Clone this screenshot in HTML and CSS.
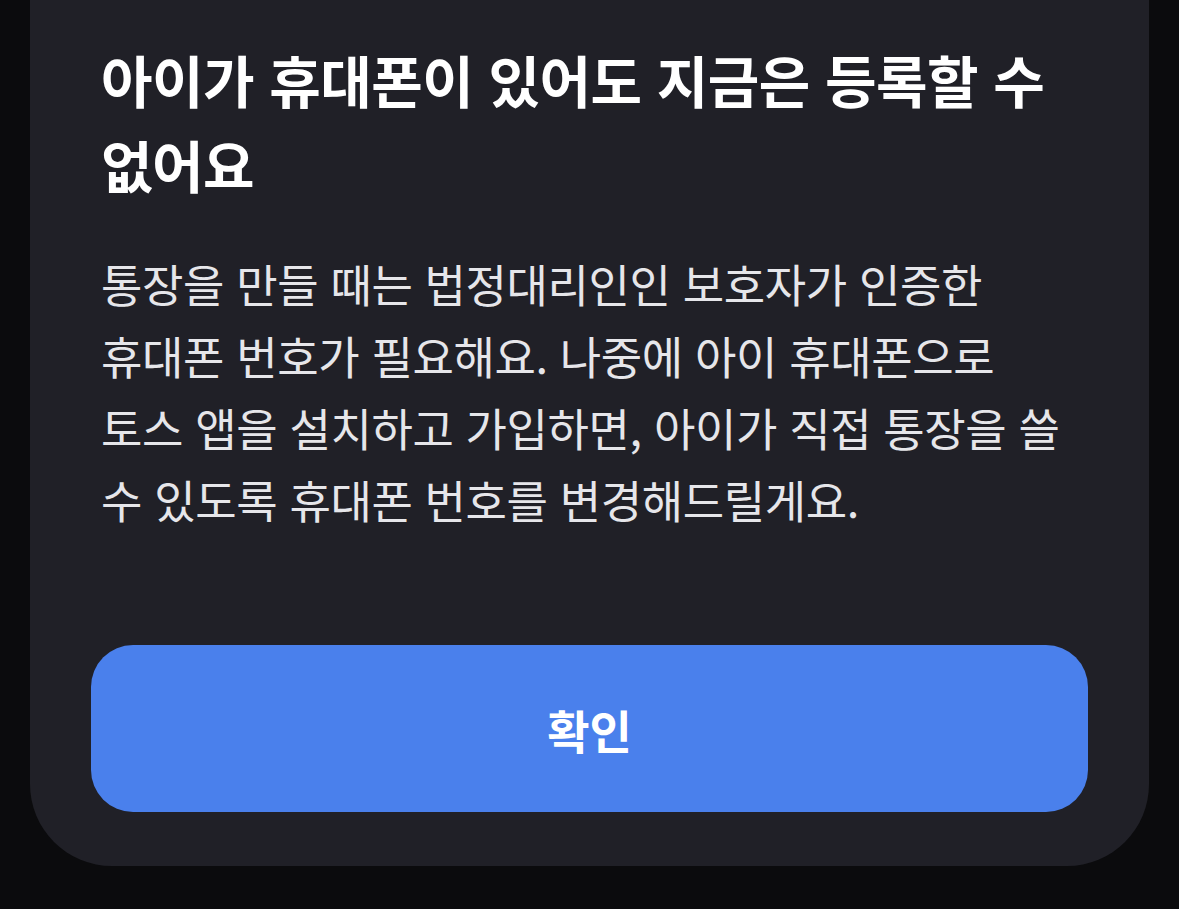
FILE: index.html
```html
<!DOCTYPE html>
<html lang="ko">
<head>
  <meta charset="UTF-8">
  <title>등록 안내</title>
  <link rel="stylesheet" href="styles.css">
</head>
<body>

<div class="sheet">
  <h1 class="title">아이가 휴대폰이 있어도 지금은 등록할 수 없어요</h1>
  <p class="desc">통장을 만들 때는 법정대리인인 보호자가 인증한 휴대폰 번호가 필요해요. 나중에 아이 휴대폰으로 토스 앱을 설치하고 가입하면, 아이가 직접 통장을 쓸 수 있도록 휴대폰 번호를 변경해드릴게요.</p>
  <button class="confirm" type="button">확인</button>
</div>

</body>
</html>
```

FILE: styles.css
```css
body {
  margin: 0;
  background: #0b0b0d;
  font-family: "Noto Sans CJK KR", "Noto Sans", sans-serif;
}

.sheet {
  background: #202027;
  margin: 0 30px;
  padding: 36px 84px 54px 71px;
  border-radius: 0 0 82px 82px;
  display: flex;
  flex-direction: column;
  word-break: keep-all;
}

.title {
  margin: 0;
  color: #fff;
  font-size: 56px;
  font-weight: 700;
  line-height: 85px;
  letter-spacing: -0.5px;
}

.desc {
  margin: 42px 0 0;
  color: #e6e6ea;
  font-size: 45px;
  font-weight: 400;
  line-height: 72px;
  letter-spacing: -0.4px;
}

.confirm {
  margin: 109px 0 0 -10px;
  width: 997px;
  height: 167px;
  border: none;
  border-radius: 42px;
  background: #4a80ec;
  color: #fff;
  font-family: inherit;
  font-size: 46px;
  font-weight: 700;
  cursor: pointer;
}
```
